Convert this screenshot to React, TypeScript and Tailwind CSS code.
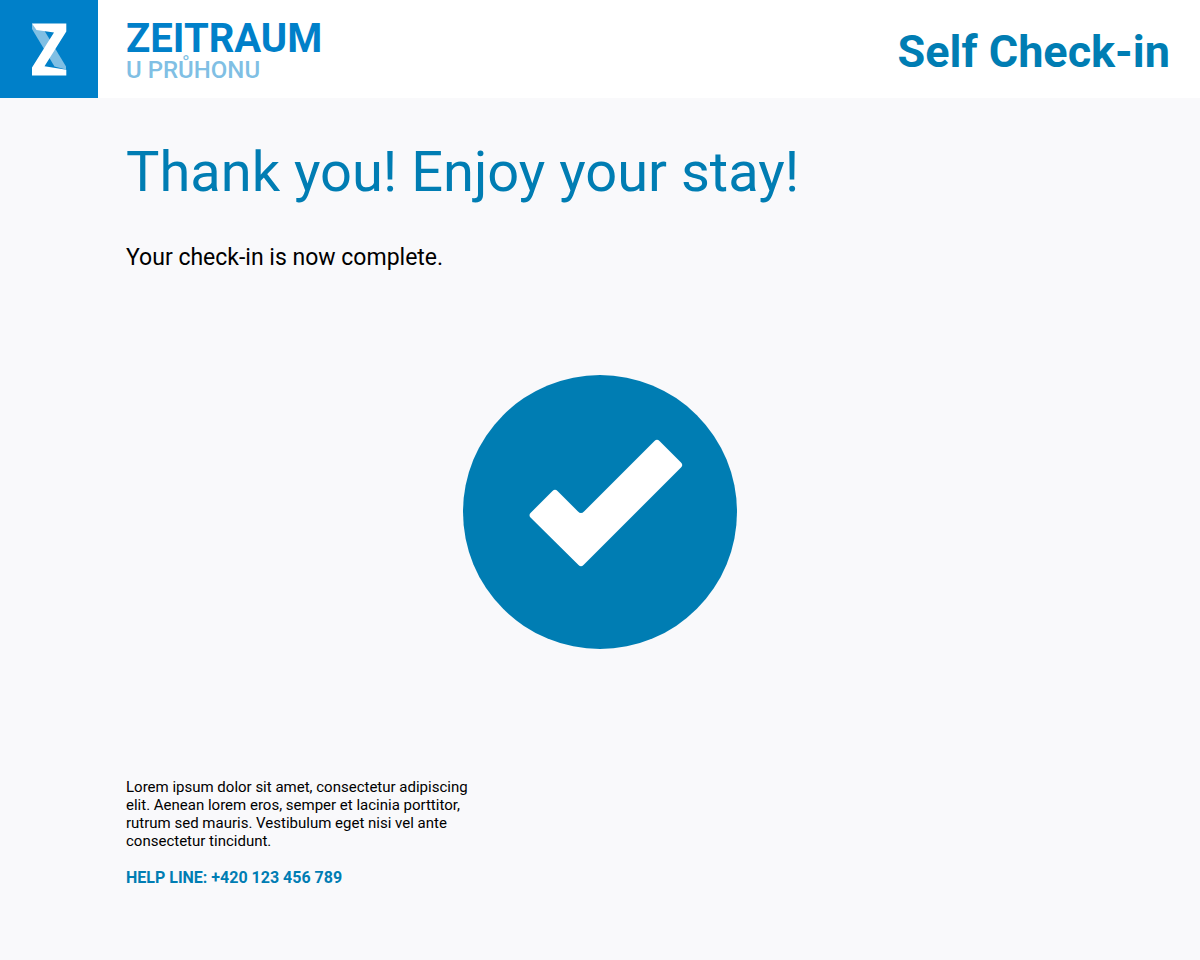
function LogoMark() {
  return (
    <svg viewBox="0 0 98 98" className="size-[98px] shrink-0" aria-hidden="true">
      <rect width="98" height="98" fill="#0080c9" />
      <path d="M32 23.5V29L54.5 66.5L66 69.5V66.5L44 30Z" fill="#80bfe4" />
      <path
        d="M32 23.5H66.3V31.5L44.5 66.3L66.3 69.8V75.6H32V67.5L54 32.5L36.5 30Z"
        fill="#fff"
      />
    </svg>
  )
}

function CheckBadge() {
  return (
    <svg viewBox="0 0 274 274" className="size-[274px]" role="img" aria-label="Check-in complete">
      <circle cx="137" cy="137" r="137" fill="#007db3" />
      <path
        d="M67.5 138L89.5 116Q92 113.5 94.5 116L115 136.5Q118 139.5 121 136.5L191.5 66Q194 63.5 196.5 66L218 87.5Q220.5 90 218 92.5L120.5 190Q118 192.5 115.5 190L67.5 142.5Q65.5 140 67.5 138Z"
        fill="#fff"
      />
    </svg>
  )
}

function Header() {
  return (
    <header className="flex items-center justify-between bg-white pr-[30px]">
      <a href="#" className="flex items-center gap-7">
        <LogoMark />
        <span className="flex flex-col pt-1">
          <span className="text-[40px] leading-[38px] font-bold text-[#0080c9]">ZEITRAUM</span>
          <span className="text-2xl leading-6 font-medium text-[#80bfe4]">U PRŮHONU</span>
        </span>
      </a>
      <p className="pt-1 text-[45px] leading-none font-bold text-[#007db3]">Self Check-in</p>
    </header>
  )
}

export default function App() {
  return (
    <div className="flex min-h-screen flex-col bg-[#f9f9fb] font-['Roboto',sans-serif] text-black">
      <Header />
      <main className="flex flex-1 flex-col px-[126px] pt-10 pb-[70px]">
        <h1 className="text-[56px] leading-[68px] font-normal text-[#007db3]">
          Thank you! Enjoy your stay!
        </h1>
        <p className="mt-9 text-[23px] leading-8">Your check-in is now complete.</p>
        <div className="flex flex-1 items-center justify-center pb-7">
          <CheckBadge />
        </div>
        <footer className="text-[15px] leading-[18px]">
          <p>
            Lorem ipsum dolor sit amet, consectetur adipiscing
            <br />
            elit. Aenean lorem eros, semper et lacinia porttitor,
            <br />
            rutrum sed mauris. Vestibulum eget nisi vel ante
            <br />
            consectetur tincidunt.
          </p>
          <p className="mt-4 text-base leading-6 font-bold text-[#007db3]">
            HELP LINE: +420 123 456 789
          </p>
        </footer>
      </main>
    </div>
  )
}
